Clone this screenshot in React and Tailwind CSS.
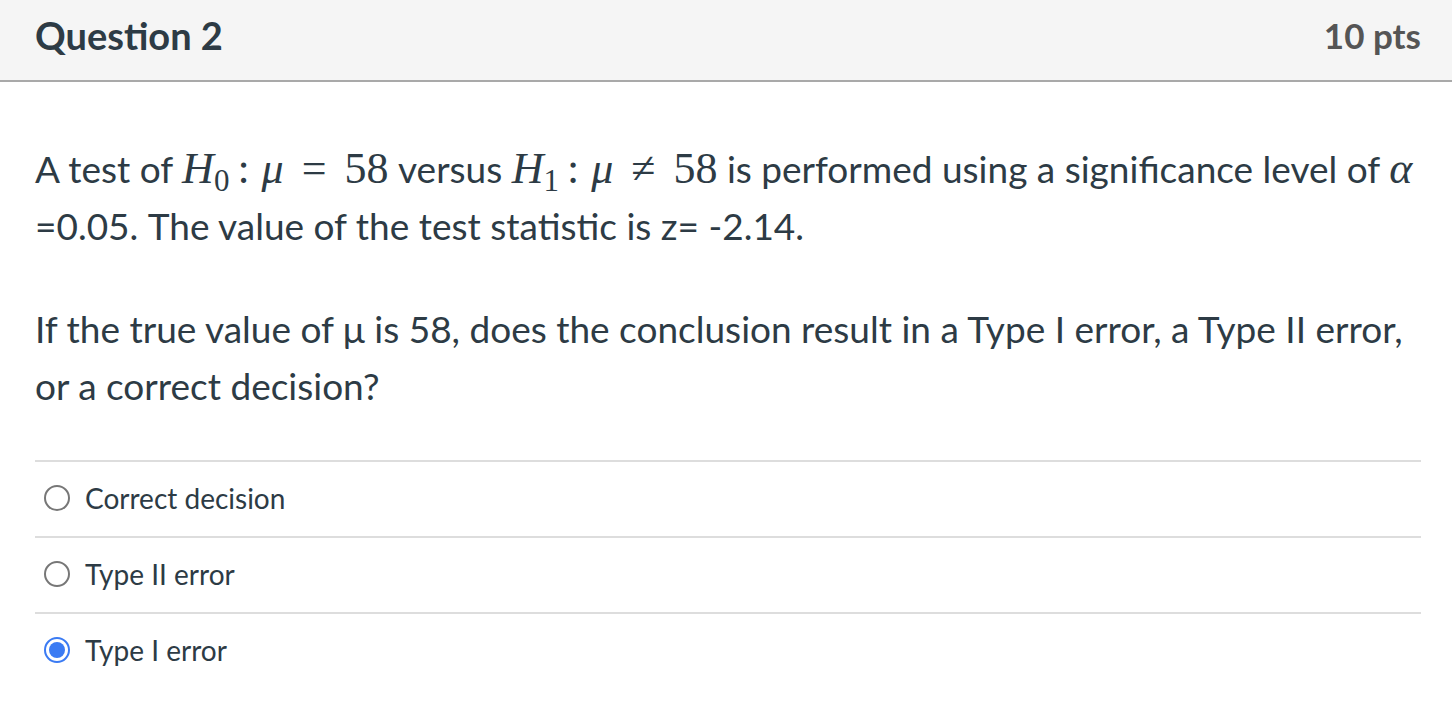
import React from 'react';

const lato = { fontFamily: 'Lato, "Noto Sans", sans-serif' };
const serif = { fontFamily: '"Liberation Serif", "DejaVu Serif", serif' };

// KaTeX-like math pieces
const Mi = ({ children }) => <span className="italic">{children}</span>;

const Sub = ({ children }) => <span className="relative top-[8px] text-[31px]">{children}</span>;

const Math = ({ children }) => (
    <span className="text-[44px] leading-none" style={serif}>
        {children}
    </span>
);

const answers = [
    { id: 'a1', label: 'Correct decision', checked: false },
    { id: 'a2', label: 'Type II error', checked: false },
    { id: 'a3', label: 'Type I error', checked: true },
];

const Radio = ({ checked }) =>
    checked ? (
        <span className="flex h-[26px] w-[26px] items-center justify-center rounded-full border-[2px] border-[#3b7bf3] bg-white">
            <span className="h-[16px] w-[16px] rounded-full bg-[#3b7bf3]" />
        </span>
    ) : (
        <span className="h-[26px] w-[26px] rounded-full border-[2px] border-[#777777] bg-white" />
    );

export default function App() {
    return (
        <div className="min-h-[716px] w-full bg-white text-[#2d3b45]" style={lato}>
            {/* Header */}
            <div className="flex h-[82px] items-center justify-between border-b-[2px] border-[#a9a9a9] bg-[#f5f5f5] pl-[35px] pr-[31px] pb-[9px]">
                <h2 className="text-[38px] font-bold text-[#2d3b45]">Question 2</h2>
                <span className="text-[35px] font-bold text-[#555555]">10 pts</span>
            </div>

            {/* Body */}
            <div className="pl-[35px] pr-[31px] pt-[58px]">
                <p className="text-[37px] leading-[57px]">
                    A test of{' '}
                    <Math>
                        <Mi>H</Mi>
                        <Sub>0</Sub>
                        <span className="ml-[8px] mr-[12px]">:</span>
                        <Mi>μ</Mi>
                        <span className="mx-[18px]">=</span>
                        58
                    </Math>{' '}
                    versus{' '}
                    <Math>
                        <Mi>H</Mi>
                        <Sub>1</Sub>
                        <span className="ml-[8px] mr-[12px]">:</span>
                        <Mi>μ</Mi>
                        <span className="mx-[18px]">≠</span>
                        58
                    </Math>{' '}
                    is performed using a significance level of{' '}
                    <Math>
                        <Mi>α</Mi>
                    </Math>
                    <br />
                    =0.05. The value of the test statistic is z= -2.14.
                </p>

                <p className="mt-[46px] text-[37px] leading-[57px]">
                    If the true value of μ is 58, does the conclusion result in a Type I error, a Type II error,
                    <br />
                    or a correct decision?
                </p>

                {/* Answers */}
                <div className="mt-[46px]">
                    {answers.map((a) => (
                        <label
                            key={a.id}
                            className="flex h-[76px] items-center gap-[15px] border-t-[2px] border-[#dddddd] pl-[9px] pb-[3px]"
                        >
                            <Radio checked={a.checked} />
                            <span className="text-[28px] text-[#2d3b45]">{a.label}</span>
                        </label>
                    ))}
                </div>
            </div>
        </div>
    );
}
